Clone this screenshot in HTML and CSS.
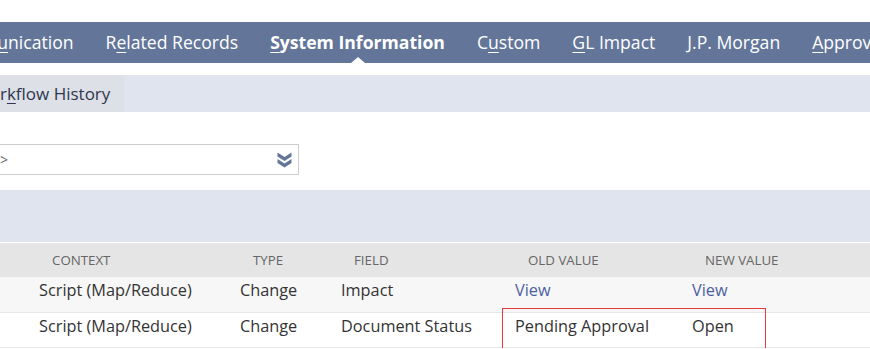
FILE: index.html
```html
<!DOCTYPE html>
<html lang="en">
<head>
    <meta charset="UTF-8">
    <meta name="viewport" content="width=device-width, initial-scale=1.0">
    <title>System Information</title>
    <link rel="stylesheet" href="styles.css">
</head>
<body>
    <div class="page">
        <ul class="tabs">
            <li class="tab tab-first">Comm<u>u</u>nication</li>
            <li class="tab">R<u>e</u>lated Records</li>
            <li class="tab active"><u>S</u>ystem Information</li>
            <li class="tab">C<u>u</u>stom</li>
            <li class="tab"><u>G</u>L Impact</li>
            <li class="tab">J.P. Morgan</li>
            <li class="tab"><u>A</u>pprovals</li>
        </ul>

        <div class="subtabs">
            <div class="subtab">Wor<u>k</u>flow History</div>
        </div>

        <div class="filter">
            <div class="select">
                <span class="select-text">&lt;All&gt;</span>
                <svg class="select-icon" width="15" height="16" viewBox="0 0 15 16">
                    <path d="M0.5 0.5 L7.5 5 L14.5 0.5 L14.5 4.5 L7.5 9 L0.5 4.5 Z" fill="#63769a"/>
                    <path d="M0.5 7 L7.5 11.5 L14.5 7 L14.5 11 L7.5 15.5 L0.5 11 Z" fill="#63769a"/>
                </svg>
            </div>
        </div>

        <div class="band"></div>

        <div class="grid">
            <div class="row head">
                <div class="cell">CONTEXT</div>
                <div class="cell">TYPE</div>
                <div class="cell">FIELD</div>
                <div class="cell">OLD VALUE</div>
                <div class="cell">NEW VALUE</div>
            </div>
            <div class="row odd">
                <div class="cell">Script (Map/Reduce)</div>
                <div class="cell">Change</div>
                <div class="cell">Impact</div>
                <div class="cell"><a class="link" href="#">View</a></div>
                <div class="cell"><a class="link" href="#">View</a></div>
            </div>
            <div class="row">
                <div class="cell">Script (Map/Reduce)</div>
                <div class="cell">Change</div>
                <div class="cell">Document Status</div>
                <div class="cell">Pending Approval</div>
                <div class="cell">Open</div>
            </div>
            <div class="highlight"></div>
        </div>
    </div>
</body>
</html>
```

FILE: styles.css
```css
body {
    margin: 0;
    font-family: "Open Sans", "Noto Sans", sans-serif;
    background-color: #fff;
    overflow: hidden;
}

.page {
    padding-top: 22px;
    width: 870px;
    position: relative;
}

.tabs {
    list-style: none;
    margin: 0;
    padding: 0;
    height: 41px;
    background-color: #63769a;
    display: flex;
    align-items: center;
    white-space: nowrap;
}

.tab {
    color: #fff;
    font-size: 17.6px;
    padding: 0 16px;
    position: relative;
    line-height: 41px;
}

.tab-first {
    margin-left: -73px;
}

.tab u {
    text-underline-offset: 3px;
}

.tab.active {
    font-weight: 700;
}

.tab.active::after {
    content: "";
    position: absolute;
    left: 50%;
    bottom: 0;
    margin-left: -7px;
    border-left: 7px solid transparent;
    border-right: 7px solid transparent;
    border-bottom: 6px solid #fff;
}

.subtabs {
    margin-top: 12px;
    height: 37px;
    background-color: #e0e4ee;
    display: flex;
}

.subtab {
    background-color: #dde0e6;
    color: #2e3650;
    font-size: 17px;
    line-height: 37px;
    padding: 0 14px 0 0;
    margin-left: -26px;
}

.subtab u {
    text-underline-offset: 3px;
}

.filter {
    height: 78px;
    box-sizing: border-box;
    padding-top: 32px;
}

.select {
    box-sizing: border-box;
    margin-left: -33px;
    width: 332px;
    height: 31px;
    border: 1px solid #cccccc;
    display: flex;
    align-items: center;
    justify-content: space-between;
    padding: 0 6px 0 8px;
}

.select-text {
    color: #666;
    font-size: 14px;
}

.select-icon {
    display: block;
}

.band {
    height: 52px;
    background-color: #e0e4ee;
    border-bottom: 1px solid #fff;
}

.grid {
    position: relative;
}

.row {
    display: grid;
    grid-template-columns: 201px 101px 174px 177px 1fr;
    padding-left: 39px;
    height: 35px;
    box-sizing: border-box;
    padding-top: 2px;
    align-items: start;
    border-bottom: 1px solid #e6e6e6;
    font-size: 16.3px;
    color: #333;
}

.row.head {
    background-color: #e5e5e5;
    height: 34px;
    padding-top: 0;
    align-items: center;
    font-size: 13.3px;
    color: #666;
    border-bottom: none;
}

.row.head .cell {
    padding-left: 13px;
}

.row.odd {
    background-color: #f7f7f7;
    height: 36px;
}

.link {
    color: #4d5fa0;
    text-decoration: none;
}

.highlight {
    position: absolute;
    left: 502px;
    top: 65px;
    width: 262px;
    height: 39px;
    border: 1px solid #e53b3b;
}
```
